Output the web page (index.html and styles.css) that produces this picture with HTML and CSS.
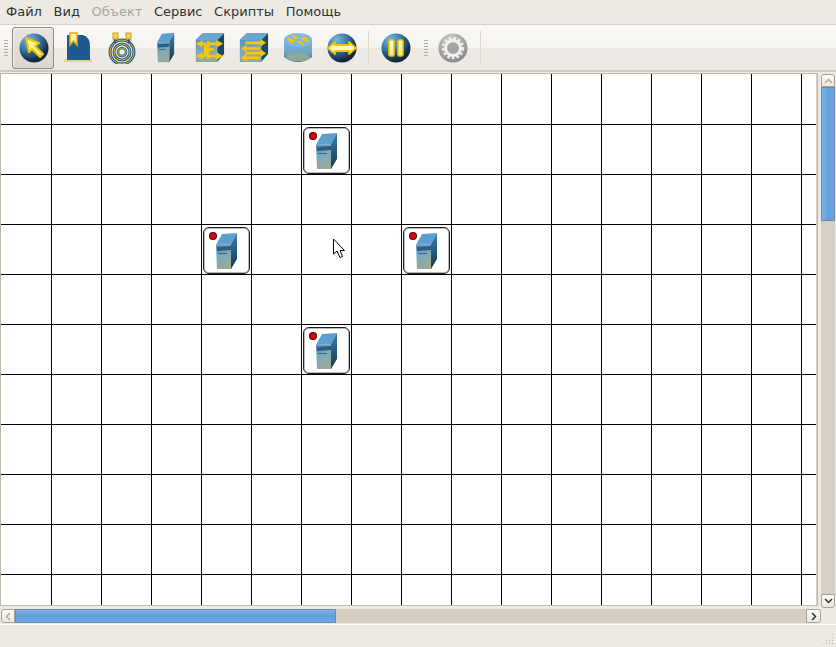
FILE: index.html
```html
<!DOCTYPE html>
<html>
  <head>
    <title>Netemul</title>
    <meta charset="UTF-8" />
    <link rel="stylesheet" href="styles.css">
  </head>
  <body>
    <svg class="defs" width="0" height="0">
      <defs>
        <radialGradient id="ball" cx="32%" cy="22%" r="85%">
          <stop offset="0" stop-color="#7db5dc" />
          <stop offset="0.45" stop-color="#37789f" />
          <stop offset="0.8" stop-color="#16304a" />
          <stop offset="1" stop-color="#0f2033" />
        </radialGradient>
        <radialGradient id="ballGray" cx="40%" cy="25%" r="85%">
          <stop offset="0" stop-color="#cfcfcd" />
          <stop offset="1" stop-color="#80807e" />
        </radialGradient>
        <linearGradient id="front" x1="0" y1="0" x2="0.4" y2="1">
          <stop offset="0" stop-color="#4f93c6" />
          <stop offset="0.55" stop-color="#7fa9bf" />
          <stop offset="1" stop-color="#98ab98" />
        </linearGradient>
        <linearGradient id="side" x1="0" y1="0" x2="0" y2="1">
          <stop offset="0" stop-color="#3b7fb0" />
          <stop offset="1" stop-color="#163650" />
        </linearGradient>
        <linearGradient id="drum" x1="0" y1="0" x2="0" y2="1">
          <stop offset="0" stop-color="#76b6e4" />
          <stop offset="0.6" stop-color="#6ea2c4" />
          <stop offset="1" stop-color="#2d5472" />
        </linearGradient>
        <linearGradient id="barFill" x1="0" y1="0" x2="0" y2="1">
          <stop offset="0" stop-color="#fffde0" />
          <stop offset="1" stop-color="#ffe97a" />
        </linearGradient>

        <symbol id="server" viewBox="0 0 22 38">
          <path d="M0 13 L6 2 L21 1 L15 12 Z" fill="#5d9fd0" />
          <path d="M15 12 L21 1 V27 L15 37 Z" fill="url(#side)" />
          <path d="M0 13 L15 12 V37 L1 37 Z" fill="url(#front)" />
          <path d="M1 15 L15 14 V18 L1 19 Z" fill="#2f5d7e" />
          <path d="M2 21 H11 V22 H2 Z" fill="#3a6484" />
          <rect x="12" y="23" width="2" height="1.500" fill="#5fc26a" />
        </symbol>
      </defs>
    </svg>

    <nav class="menubar">
      <span class="menu-item">Файл</span>
      <span class="menu-item">Вид</span>
      <span class="menu-item disabled">Объект</span>
      <span class="menu-item">Сервис</span>
      <span class="menu-item">Скрипты</span>
      <span class="menu-item">Помощь</span>
    </nav>

    <div class="toolbar">
      <span class="grip first-grip"></span>
      <button class="tool active">
        <svg width="32" height="32" viewBox="0 0 32 32">
          <circle cx="16" cy="16" r="14.500" fill="url(#ball)" />
          <path d="M8 6 L21 11 L17 14 L25 22 L22 25 L14 17 L11 20 Z" fill="#fff3a0" stroke="#f5c400" stroke-width="2" stroke-linejoin="round" />
        </svg>
      </button>
      <button class="tool">
        <svg width="32" height="32" viewBox="0 0 32 32">
          <path d="M2 27 H30 V30 H2 Z" fill="#e6d68c" />
          <path d="M5 3 H21 Q28 5 28 14 V28 H5 Z" fill="#1f5a8e" />
          <path d="M8 1 H15 V13 L11.500 9 L8 13 Z" fill="#fff0a8" stroke="#e0ac1c" stroke-width="1.500" />
        </svg>
      </button>
      <button class="tool">
        <svg width="32" height="32" viewBox="0 0 32 32">
          <g fill="none">
            <circle cx="16" cy="20" r="12" stroke="#2a5f86" stroke-width="3" />
            <circle cx="16" cy="20" r="12" stroke="#d9b32c" stroke-width="1" />
            <circle cx="16" cy="20" r="8" stroke="#2a5f86" stroke-width="3" />
            <circle cx="16" cy="20" r="8" stroke="#d9b32c" stroke-width="1" />
            <circle cx="16" cy="20" r="4" stroke="#2a5f86" stroke-width="2.500" />
            <circle cx="16" cy="20" r="4" stroke="#d9b32c" stroke-width="0.800" />
            <path d="M9 6 V11 M23 6 V11" stroke="#2a5f86" stroke-width="2.500" />
          </g>
          <rect x="7" y="1" width="5" height="6" fill="#f3d35a" stroke="#cc9d1c" />
          <rect x="20" y="1" width="5" height="6" fill="#f3d35a" stroke="#cc9d1c" />
        </svg>
      </button>
      <button class="tool">
        <svg width="18" height="31" viewBox="0 0 22 38"><use href="#server" /></svg>
      </button>
      <button class="tool">
        <svg width="30" height="31" viewBox="0 0 32 32">
          <path d="M1 8 L8 1 H31 V23 L24 31 H1 Z" fill="#1d4766" />
          <path d="M1 8 H24 V31 H1 Z" fill="url(#front)" />
          <path d="M1 8 L8 1 H31 L24 8 Z" fill="#6aa6d0" />
          <path d="M6 12 H11 M6 25 H11 M11 12 V25 M11 18 H20 M14 9 V28 M14 12 H24 M14 25 H24" stroke="#f7c800" stroke-width="2.800" fill="none" />
          <path d="M8 8 L1 12 L8 16 Z M8 21 L1 25 L8 29 Z M23 8 L30 12 L23 16 Z M23 21 L30 25 L23 29 Z" fill="#f7c800" />
        </svg>
      </button>
      <button class="tool">
        <svg width="30" height="31" viewBox="0 0 32 32">
          <path d="M1 8 L8 1 H31 V23 L24 31 H1 Z" fill="#1d4766" />
          <path d="M1 8 H24 V31 H1 Z" fill="url(#front)" />
          <path d="M1 8 L8 1 H31 L24 8 Z" fill="#6aa6d0" />
          <path d="M7 11 H24 M6 17 H22 M7 22 H24 M6 27 H22" stroke="#f7c800" stroke-width="2.800" fill="none" />
          <path d="M23 7 L29 11 L23 15 Z M8 13 L2 17 L8 21 Z M23 18 L29 22 L23 26 Z M8 23 L2 27 L8 31 Z" fill="#f7c800" />
        </svg>
      </button>
      <button class="tool">
        <svg width="32" height="32" viewBox="0 0 32 32">
          <path d="M2 8 V25 Q16 35 30 25 V8 Z" fill="url(#drum)" />
          <ellipse cx="16" cy="25" rx="12" ry="4.500" fill="#8aa99a" />
          <ellipse cx="16" cy="8" rx="14" ry="7" fill="#7fb9e3" />
          <path d="M5 6 L13 9 L9 11 Z M27 10 L19 7 L23 5 Z M10 3 L16 6 L13 7 Z M22 13 L16 10 L19 9 Z" fill="#f7c800" stroke="#f7c800" />
        </svg>
      </button>
      <button class="tool">
        <svg width="32" height="32" viewBox="0 0 32 32">
          <circle cx="16" cy="16" r="14.500" fill="url(#ball)" />
          <path d="M2 16 L9 10 V13 H23 V10 L30 16 L23 22 V19 H9 V22 Z" fill="#fff8c8" stroke="#f5c400" stroke-width="1.800" stroke-linejoin="round" />
        </svg>
      </button>
      <span class="separator"></span>
      <button class="tool">
        <svg width="32" height="32" viewBox="0 0 32 32">
          <circle cx="16" cy="16" r="14.500" fill="url(#ball)" />
          <rect x="9" y="8" width="5" height="16" rx="1.500" fill="url(#barFill)" stroke="#f5c400" stroke-width="1.500" />
          <rect x="18" y="8" width="5" height="16" rx="1.500" fill="url(#barFill)" stroke="#f5c400" stroke-width="1.500" />
        </svg>
      </button>
      <span class="grip"></span>
      <button class="tool">
        <svg width="32" height="32" viewBox="0 0 32 32">
          <circle cx="16" cy="16" r="14.500" fill="url(#ballGray)" />
          <circle cx="16" cy="16" r="9.500" fill="none" stroke="#ecece9" stroke-width="3.500" stroke-dasharray="2.500 2" />
          <circle cx="16" cy="16" r="7.500" fill="none" stroke="#f1f1ef" stroke-width="3" />
          <circle cx="16" cy="16" r="5.500" fill="#a3a3a1" />
        </svg>
      </button>
      <span class="separator"></span>
    </div>

    <div class="workspace">
      <div class="canvas">
        <div class="node node-top"><span class="led"></span><svg width="22" height="38" viewBox="0 0 22 38"><use href="#server" /></svg></div>
        <div class="node node-left"><span class="led"></span><svg width="22" height="38" viewBox="0 0 22 38"><use href="#server" /></svg></div>
        <div class="node node-right"><span class="led"></span><svg width="22" height="38" viewBox="0 0 22 38"><use href="#server" /></svg></div>
        <div class="node node-bottom"><span class="led"></span><svg width="22" height="38" viewBox="0 0 22 38"><use href="#server" /></svg></div>
        <svg class="pointer" width="14" height="21" viewBox="0 0 14 21">
          <path d="M1.500 1 V16 L5 13 L8 19.500 L10.500 18.500 L8 12.500 H12.500 Z" fill="#fff" stroke="#000" />
        </svg>
      </div>
      <div class="vscroll">
        <span class="scroll-btn btn-up"><svg width="9" height="6" viewBox="0 0 9 6"><path d="M1 5 L4.500 1.500 L8 5" fill="none" stroke="#b5aa99" stroke-width="1.500" /></svg></span>
        <span class="vthumb"></span>
        <span class="vtrack"></span>
        <span class="scroll-btn btn-down"><svg width="9" height="6" viewBox="0 0 9 6"><path d="M1 1 L4.500 4.500 L8 1" fill="none" stroke="#2e3436" stroke-width="1.500" /></svg></span>
      </div>
    </div>

    <div class="hscroll">
      <span class="scroll-btn btn-left"><svg width="6" height="9" viewBox="0 0 6 9"><path d="M5 1 L1.500 4.500 L5 8" fill="none" stroke="#b5aa99" stroke-width="1.500" /></svg></span>
      <span class="hthumb"></span>
      <span class="htrack"></span>
      <span class="scroll-btn btn-right"><svg width="6" height="9" viewBox="0 0 6 9"><path d="M1 1 L4.500 4.500 L1 8" fill="none" stroke="#2e3436" stroke-width="1.500" /></svg></span>
    </div>

    <div class="statusbar">
      <span class="size-grip"></span>
    </div>
  </body>
</html>
```

FILE: styles.css
```css
html {
  height: 100%;
}
body {
  margin: 0;
  height: 100%;
  overflow: hidden;
  display: flex;
  flex-direction: column;
  font-family: "DejaVu Sans", sans-serif;
  font-size: 13px;
  color: #2e3436;
  background-color: #edeae4;
}
.defs {
  position: absolute;
}

.menubar {
  height: 25px;
  flex: none;
  display: flex;
  align-items: center;
  column-gap: 11.6px;
  padding-left: 6px;
  padding-bottom: 1px;
  box-sizing: border-box;
  border-bottom: 1px solid #d6cfc4;
}
.menu-item.disabled {
  color: #aaa59c;
}

.toolbar {
  height: 47px;
  flex: none;
  display: flex;
  align-items: center;
  padding-left: 12px;
  position: relative;
  box-sizing: border-box;
  border-bottom: 2px solid #cfc8bc;
  background: linear-gradient(#fbfaf8 0, #f5f3ef 50%, #eeebe6 51%, #ecE9e3 100%);
}
.tool {
  width: 44px;
  height: 42px;
  flex: none;
  padding: 0;
  border: 1px solid transparent;
  background: none;
  display: flex;
  align-items: center;
  justify-content: center;
}
.tool.active {
  width: 42px;
  margin-right: 2px;
  padding-left: 2px;
  border: 1px solid #8f897f;
  border-radius: 3px;
  background: linear-gradient(#e8e4dd, #dcd7ce);
  box-shadow: inset 1px 1px 0 #f5f3ef;
}
.separator {
  width: 1px;
  height: 34px;
  flex: none;
  margin: 0 5px 0 4px;
  background-color: #dcd6cb;
}
.separator:last-child {
  margin-left: 5px;
}
.grip {
  width: 4px;
  height: 18px;
  flex: none;
  margin: 0 3px 0 6px;
  background-image: radial-gradient(circle, #b3aca0 0.7px, transparent 0.8px);
  background-size: 2px 3px;
}
.first-grip {
  position: absolute;
  left: 4px;
  top: 14px;
  margin: 0;
}

.workspace {
  flex: 1;
  display: flex;
  min-height: 0;
  padding-left: 1px;
}
.canvas {
  flex: 1;
  position: relative;
  margin-top: 2px;
  margin-bottom: 3px;
  overflow: hidden;
  background-color: #fff;
  background-image:
    repeating-linear-gradient(to right, transparent 0, transparent 49px, #000 49px, #000 50px),
    repeating-linear-gradient(to bottom, transparent 0, transparent 49px, #000 49px, #000 50px);
  background-position: 1px 0, 1px 1px;
  border-right: 1px solid #d6cfc4;
  box-shadow: 0 0 0 1px #bdb7ac;
}
.node {
  position: absolute;
  width: 47px;
  height: 47px;
  box-sizing: border-box;
  border: 1px solid #222;
  border-radius: 6px;
  background-color: #fff;
  box-shadow: inset 0 0 0 1px #b9b9b9;
  display: flex;
  align-items: center;
  justify-content: center;
}
.node-top { left: 302px; top: 53px; }
.node-left { left: 202px; top: 153px; }
.node-right { left: 402px; top: 153px; }
.node-bottom { left: 302px; top: 253px; }
.led {
  position: absolute;
  left: 6px;
  top: 5px;
  width: 6px;
  height: 6px;
  border-radius: 50%;
  background-color: #e00010;
  box-shadow: 0 0 0 1px #3c0a0a;
}
.pointer {
  position: absolute;
  left: 331px;
  top: 164px;
}

.scroll-btn {
  flex: none;
  box-sizing: border-box;
  border: 1px solid #a8a296;
  background: linear-gradient(#fcfbf9, #ece8e1);
  display: flex;
  align-items: center;
  justify-content: center;
}

.vscroll {
  width: 14px;
  flex: none;
  margin: 2px 1px 0 4px;
  display: flex;
  flex-direction: column;
}
.btn-up {
  height: 13px;
  border-radius: 3px 3px 0 0;
}
.btn-down {
  height: 14px;
  border-radius: 0 0 3px 3px;
}
.vthumb {
  height: 134px;
  flex: none;
  box-sizing: border-box;
  border: 1px solid #6d8ba6;
  background: linear-gradient(to right, #7ab3e8, #649fdb 50%, #6aa6df);
}
.vtrack {
  flex: 1;
  background-color: #d6cfc4;
}

.hscroll {
  height: 14px;
  flex: none;
  display: flex;
  margin: 1px 15px 1px 1px;
  box-sizing: border-box;
}
.btn-left {
  width: 14px;
  border-radius: 3px 0 0 3px;
}
.btn-right {
  width: 15px;
  border-radius: 0 3px 3px 0;
}
.hthumb {
  width: 321px;
  flex: none;
  box-sizing: border-box;
  border: 1px solid #6d8ba6;
  background: linear-gradient(#7ab3e8, #649fdb 50%, #6aa6df);
}
.htrack {
  flex: 1;
  background-color: #d6cfc4;
}

.statusbar {
  height: 23px;
  flex: none;
  position: relative;
  box-sizing: border-box;
  border-top: 1px solid #fff;
}
.size-grip {
  position: absolute;
  right: 2px;
  bottom: 2px;
  width: 12px;
  height: 12px;
  background-image: radial-gradient(circle, #b3aca0 0.8px, transparent 1px);
  background-size: 3px 3px;
  clip-path: polygon(100% 0, 100% 100%, 0 100%);
}
```
